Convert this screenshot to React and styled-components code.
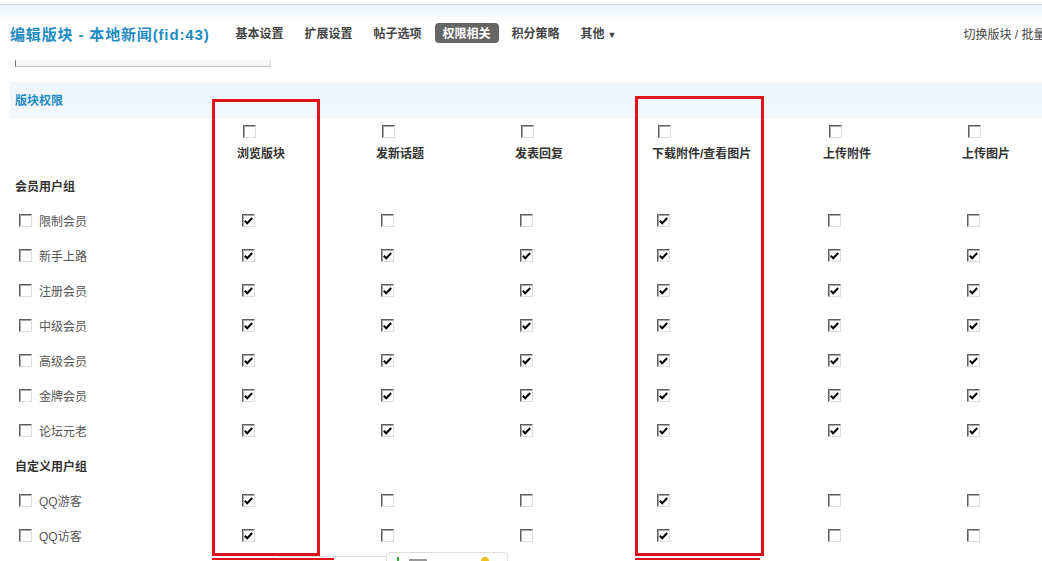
import React from 'react'
import styled, { createGlobalStyle } from 'styled-components'

const GlobalStyle = createGlobalStyle`
  html, body { margin: 0; padding: 0; background: #fff; overflow: hidden; }
  body { font-family: "Liberation Sans", "Noto Sans CJK SC", sans-serif; font-size: 12px; color: #333; }
`

const Page = styled.div`
  position: relative;
  width: 1042px;
  height: 561px;
  overflow: hidden;
`

// 상단 라인 + 그라데이션
const TopBar = styled.div`
  height: 16px;
  border-top: 4px solid #fff;
  box-shadow: inset 0 1px 0 #c6d5dc;
  background: linear-gradient(#e6f2fa, #ffffff);
`

const Header = styled.div`
  display: flex;
  align-items: center;
  height: 26px;
  padding-left: 10px;
  white-space: nowrap;
`

const Title = styled.h1`
  margin: 0 18px 0 0;
  font-size: 15px;
  font-weight: bold;
  color: #1f8bc3;
  font-family: "Liberation Sans", "Noto Sans CJK SC", sans-serif;
  letter-spacing: 0.85px;
`

const Nav = styled.div`
  display: flex;
  gap: 5px;
`

const NavItem = styled.span`
  padding: 1px 8px 2px;
  border-radius: 4px;
  font-weight: bold;
  font-size: 12px;
  color: ${p => (p.$active ? '#fff' : '#444')};
  background: ${p => (p.$active ? '#666' : 'transparent')};
`

const Arrow = styled.span`
  font-size: 9px;
  margin-left: 3px;
`

const RightLinks = styled.div`
  margin-left: 339px;
  flex-shrink: 0;
  color: #444;
  font-size: 12px;
`

const Stub = styled.div`
  margin: 14px 0 0 15px;
  width: 254px;
  height: 6px;
  background: #f6f6f6;
  border-left: 1px solid #777;
  border-right: 1px solid #ddd;
  border-bottom: 1px solid #bdbdbd;
`

const Content = styled.div`
  padding-left: 10px;
  margin-top: 15px;
`

const SectionBar = styled.div`
  height: 35px;
  display: flex;
  align-items: center;
  padding-left: 5px;
  background: linear-gradient(#edf5fb, #f3f8fc);
  border-bottom: 1px solid #eef2f5;
  color: #1f8bc3;
  font-weight: bold;
  font-size: 12px;
`

const Grid = styled.div`
  display: grid;
  grid-template-columns: 227px 139px 139px 137px 171px 139px 1fr;
`

const HeadCell = styled.div`
  height: 50px;
  display: flex;
  flex-direction: column;
  align-items: flex-start;
  padding-top: 7px;
  box-sizing: border-box;
  gap: 6px;
  font-weight: bold;
  color: #333;
  white-space: nowrap;
  .box { margin-left: 6px; }
`

const GroupCell = styled.div`
  grid-column: 1 / -1;
  height: 35px;
  display: flex;
  align-items: center;
  padding-left: 5px;
  font-weight: bold;
  color: #333;
`

const Cell = styled.div`
  height: 35px;
  display: flex;
  align-items: center;
  padding-left: ${p => p.$pad || 5}px;
  color: #555;
  gap: 7px;
`

const Box = styled.span`
  display: inline-flex;
  align-items: center;
  justify-content: center;
  box-sizing: border-box;
  width: 13px;
  height: 13px;
  background: #fff;
  border: 1px solid;
  border-color: #5e5e5e #dcdcdc #dcdcdc #5e5e5e;
  box-shadow: inset 1px 1px 0 #a8a8a8;
`

const RedBox = styled.div`
  position: absolute;
  left: ${p => p.$x}px;
  top: ${p => p.$y}px;
  width: ${p => p.$w}px;
  height: ${p => p.$h}px;
  box-sizing: border-box;
  border: 3px solid #e0121a;
  pointer-events: none;
`

const RedLine = styled.div`
  position: absolute;
  left: ${p => p.$x}px;
  top: 558px;
  width: ${p => p.$w}px;
  height: 2px;
  background: #e0121a;
`

const GrayLine = styled.div`
  position: absolute;
  left: 278px;
  top: 556px;
  width: 108px;
  height: 1px;
  background: #ddd;
`

const Popup = styled.div`
  position: absolute;
  left: 386px;
  top: 552px;
  width: 122px;
  height: 20px;
  border: 1px solid #ddd;
  border-radius: 4px;
  background: #fff;
  display: flex;
  align-items: flex-start;
  padding: 4px 0 0 10px;
  gap: 10px;
  box-sizing: border-box;
  .g { width: 2px; height: 10px; background: #3aa83a; }
  .y { width: 8px; height: 8px; border-radius: 50%; background: #f2c21b; margin-left: 44px; }
  .t { width: 18px; height: 2px; background: #999; margin-top: 2px; }
`

function Check({ on }) {
  return (
    <Box className="box">
      {on && (
        <svg width="9" height="8" viewBox="0 0 9 8">
          <path d="M0.8 3.8 L3.2 6.3 L8.2 1" fill="none" stroke="#000" strokeWidth="2" />
        </svg>
      )}
    </Box>
  )
}

const columns = ['浏览版块', '发新话题', '发表回复', '下载附件/查看图片', '上传附件', '上传图片']

const ALL = [1, 1, 1, 1, 1, 1]
const LIMIT = [1, 0, 0, 1, 0, 0]

const groups = [
  {
    name: '会员用户组',
    rows: [
      ['限制会员', LIMIT],
      ['新手上路', ALL],
      ['注册会员', ALL],
      ['中级会员', ALL],
      ['高级会员', ALL],
      ['金牌会员', ALL],
      ['论坛元老', ALL],
    ],
  },
  {
    name: '自定义用户组',
    rows: [
      ['QQ游客', LIMIT],
      ['QQ访客', LIMIT],
    ],
  },
]

export default function App() {
  return (
    <Page>
      <GlobalStyle />
      <TopBar />
      <Header>
        <Title>编辑版块 - 本地新闻(fid:43)</Title>
        <Nav>
          <NavItem>基本设置</NavItem>
          <NavItem>扩展设置</NavItem>
          <NavItem>帖子选项</NavItem>
          <NavItem $active>权限相关</NavItem>
          <NavItem>积分策略</NavItem>
          <NavItem>其他<Arrow>▼</Arrow></NavItem>
        </Nav>
        <RightLinks>切换版块 / 批量编辑</RightLinks>
      </Header>
      <Stub />
      <Content>
        <SectionBar>版块权限</SectionBar>
        <Grid>
          <HeadCell />
          {columns.map(c => (
            <HeadCell key={c}>
              <Check />
              <span>{c}</span>
            </HeadCell>
          ))}
          {groups.map(g => (
            <React.Fragment key={g.name}>
              <GroupCell>{g.name}</GroupCell>
              {g.rows.map(([label, vals]) => (
                <React.Fragment key={label}>
                  <Cell $pad={9}>
                    <Check />
                    <span>{label}</span>
                  </Cell>
                  {vals.map((v, i) => (
                    <Cell key={i}>
                      <Check on={!!v} />
                    </Cell>
                  ))}
                </React.Fragment>
              ))}
            </React.Fragment>
          ))}
        </Grid>
      </Content>
      {/* 빨간 표시 박스 */}
      <RedBox $x={212} $y={99} $w={108} $h={457} />
      <RedBox $x={635} $y={96} $w={129} $h={460} />
      <RedLine $x={212} $w={122} />
      <RedLine $x={635} $w={125} />
      <GrayLine />
      <Popup>
        <span className="g" />
        <span className="t" />
        <span className="y" />
      </Popup>
    </Page>
  )
}
